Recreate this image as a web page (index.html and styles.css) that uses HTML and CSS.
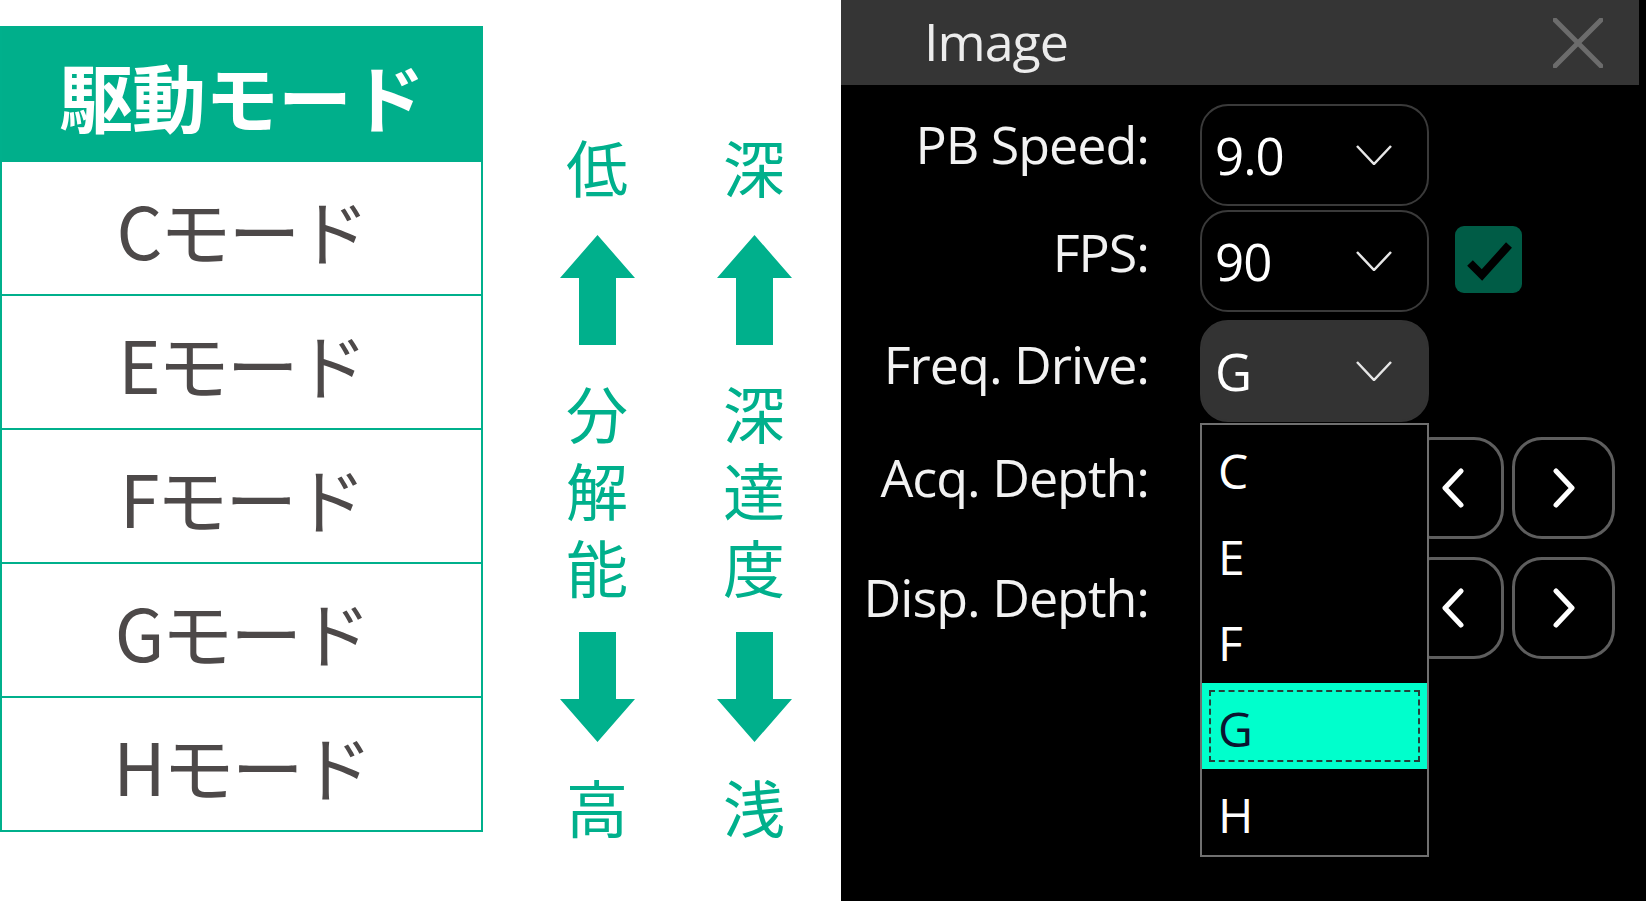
FILE: index.html
```html
<!DOCTYPE html>
<html lang="ja">
<head>
<meta charset="utf-8">
<title>駆動モード</title>
<link rel="stylesheet" href="styles.css">
</head>
<body>
<div class="modes">
  <div class="modes-head">駆動モード</div>
  <div class="modes-row">Cモード</div>
  <div class="modes-row">Eモード</div>
  <div class="modes-row">Fモード</div>
  <div class="modes-row">Gモード</div>
  <div class="modes-row">Hモード</div>
</div>

<div class="guide">
  <div class="gcol">
    <div class="gchar">低</div>
    <svg class="arrow up" viewBox="0 0 75 110"><polygon points="37.5,0 75,43 56,43 56,110 19,110 19,43 0,43"/></svg>
    <div class="gstack">分解能</div>
    <svg class="arrow down" viewBox="0 0 75 110"><polygon points="19,0 56,0 56,67 75,67 37.5,110 0,67 19,67"/></svg>
    <div class="gchar last">高</div>
  </div>
  <div class="gcol">
    <div class="gchar">深</div>
    <svg class="arrow up" viewBox="0 0 75 110"><polygon points="37.5,0 75,43 56,43 56,110 19,110 19,43 0,43"/></svg>
    <div class="gstack">深達度</div>
    <svg class="arrow down" viewBox="0 0 75 110"><polygon points="19,0 56,0 56,67 75,67 37.5,110 0,67 19,67"/></svg>
    <div class="gchar last">浅</div>
  </div>
</div>

<div class="panel">
  <div class="titlebar">
    <span class="title">Image</span>
    <svg class="close" viewBox="0 0 50 50"><line x1="2" y1="2" x2="48" y2="48"/><line x1="48" y1="2" x2="2" y2="48"/></svg>
  </div>
  <div class="form">
    <div class="row row-pb">
      <div class="label">PB Speed:</div>
      <div class="combo"><span class="val">9.0</span><svg class="chev" viewBox="0 0 36 20"><polyline points="1,1 18,19 35,1"/></svg></div>
    </div>
    <div class="row row-fps">
      <div class="label">FPS:</div>
      <div class="combo"><span class="val">90</span><svg class="chev" viewBox="0 0 36 20"><polyline points="1,1 18,19 35,1"/></svg></div>
      <div class="check"><svg viewBox="0 0 67 67"><polyline points="15,37 27,49 54,19"/></svg></div>
    </div>
    <div class="row row-freq">
      <div class="label">Freq. Drive:</div>
      <div class="combo active"><span class="val">G</span><svg class="chev" viewBox="0 0 36 20"><polyline points="1,1 18,19 35,1"/></svg></div>
    </div>
    <div class="row row-acq">
      <div class="label">Acq. Depth:</div>
      <div class="spacer"></div>
      <div class="btn"><svg viewBox="0 0 22 40"><polyline points="19,3 3,20 19,37"/></svg></div>
      <div class="btn"><svg viewBox="0 0 22 40"><polyline points="3,3 19,20 3,37"/></svg></div>
    </div>
    <div class="row row-disp">
      <div class="label">Disp. Depth:</div>
      <div class="spacer"></div>
      <div class="btn"><svg viewBox="0 0 22 40"><polyline points="19,3 3,20 19,37"/></svg></div>
      <div class="btn"><svg viewBox="0 0 22 40"><polyline points="3,3 19,20 3,37"/></svg></div>
    </div>
  </div>
  <div class="list">
    <div class="item">C</div>
    <div class="item">E</div>
    <div class="item">F</div>
    <div class="item selected"><span class="focus">G</span></div>
    <div class="item">H</div>
  </div>
</div>
</body>
</html>
```

FILE: styles.css
```css
html, body {
  margin: 0;
  padding: 0;
}
body {
  width: 1646px;
  height: 901px;
  overflow: hidden;
  background: #ffffff;
  display: flex;
  align-items: flex-start;
  font-family: "Noto Sans CJK JP", "Noto Sans", sans-serif;
}

/* ---------- mode table ---------- */
.modes {
  margin-top: 26px;
  width: 483px;
  box-sizing: border-box;
  border-left: 2px solid #00b08c;
  border-right: 2px solid #00b08c;
  flex: none;
}
.modes-head {
  height: 136px;
  background: #00af8b;
  color: #ffffff;
  font-weight: 700;
  font-size: 74px;
  display: flex;
  align-items: center;
  justify-content: center;
  letter-spacing: -1px;
}
.modes-row {
  height: 132px;
  border-bottom: 2px solid #00b08c;
  color: #4d4949;
  font-size: 72px;
  letter-spacing: -3px;
  display: flex;
  align-items: center;
  justify-content: center;
}

/* ---------- guide arrows ---------- */
.guide {
  margin-left: 74px;
  padding-top: 134px;
  display: flex;
  gap: 77px;
  flex: none;
}
.gcol {
  width: 80px;
  display: flex;
  flex-direction: column;
  align-items: center;
  color: #00b08c;
}
.gchar {
  font-size: 62px;
  line-height: 64px;
  height: 64px;
}
.gchar.last {
  margin-top: 32px;
}
.gstack {
  margin-top: 39px;
  writing-mode: vertical-rl;
  text-orientation: upright;
  font-size: 62px;
  line-height: 64px;
  letter-spacing: 15px;
}
.arrow {
  width: 75px;
  height: 110px;
  fill: #00b08c;
  display: block;
}
.arrow.up {
  margin-top: 37px;
}
.arrow.down {
  margin-top: 17px;
}

/* ---------- dark panel ---------- */
.panel {
  margin-left: 47px;
  width: 805px;
  height: 901px;
  background: #000000;
  position: relative;
  flex: none;
  font-family: "Open Sans", "Noto Sans", sans-serif;
  color: #f2f2f2;
}
.titlebar {
  width: 798px;
  height: 85px;
  background: #353535;
  display: flex;
  align-items: center;
  justify-content: space-between;
  box-sizing: border-box;
  padding-left: 83px;
  padding-right: 36px;
}
.title {
  font-size: 52px;
  letter-spacing: -1px;
  color: #ececec;
  line-height: 1;
  padding-bottom: 4px;
}
.close {
  width: 50px;
  height: 50px;
  stroke: #6c6c6c;
  stroke-width: 5;
  stroke-linecap: round;
}

.form {
  padding-top: 19px;
  display: flex;
  flex-direction: column;
}
.row {
  display: flex;
  align-items: center;
  height: 102px;
}
.row-fps { margin-top: 4px; }
.row-freq { margin-top: 8px; }
.row-acq { margin-top: 15px; }
.row-disp { margin-top: 18px; }

.label {
  width: 308px;
  text-align: right;
  font-size: 52px;
  letter-spacing: -1px;
  line-height: 1;
  padding-bottom: 22px;
  margin-right: 51px;
  flex: none;
}
.row-fps .label { padding-bottom: 18px; }
.row-freq .label { padding-bottom: 14px; }
.combo {
  width: 229px;
  height: 102px;
  box-sizing: border-box;
  border: 2px solid #3a3a3a;
  border-radius: 28px;
  display: flex;
  align-items: center;
  justify-content: space-between;
  padding-left: 13px;
  padding-right: 35px;
  flex: none;
}
.combo.active {
  background: #333333;
  border-color: #333333;
}
.val {
  font-size: 51px;
  letter-spacing: -1px;
  line-height: 1;
  color: #ffffff;
}
.chev {
  width: 36px;
  height: 20px;
  fill: none;
  stroke: #e6e6e6;
  stroke-width: 2.5;
}
.check {
  margin-left: 26px;
  width: 67px;
  height: 67px;
  border-radius: 9px;
  background: #005c46;
  margin-top: -4px;
}
.check svg {
  width: 67px;
  height: 67px;
  fill: none;
  stroke: #000000;
  stroke-width: 8;
  display: block;
}
.spacer {
  width: 201px;
  flex: none;
}
.btn {
  width: 103px;
  height: 102px;
  box-sizing: border-box;
  border: 3px solid #5e5e5e;
  border-radius: 30px;
  display: flex;
  align-items: center;
  justify-content: center;
  margin-right: 8px;
  flex: none;
}
.btn svg {
  width: 22px;
  height: 40px;
  fill: none;
  stroke: #ffffff;
  stroke-width: 5;
  stroke-linecap: round;
  stroke-linejoin: round;
}

/* ---------- open dropdown list ---------- */
.list {
  position: absolute;
  left: 359px;
  top: 423px;
  width: 229px;
  box-sizing: border-box;
  border: 2px solid #707070;
  background: #000000;
}
.item {
  height: 86px;
  display: flex;
  align-items: center;
  padding-left: 16px;
  font-size: 48px;
  line-height: 1;
  color: #ffffff;
  box-sizing: border-box;
  padding-top: 6px;
}
.item.selected {
  background: #00ffcc;
  color: #0b1530;
  padding: 7px 7px 7px 7px;
}
.focus {
  flex: 1;
  height: 100%;
  box-sizing: border-box;
  border: 2px dashed #24403a;
  display: flex;
  align-items: center;
  padding-left: 7px;
  padding-top: 6px;
}
```
